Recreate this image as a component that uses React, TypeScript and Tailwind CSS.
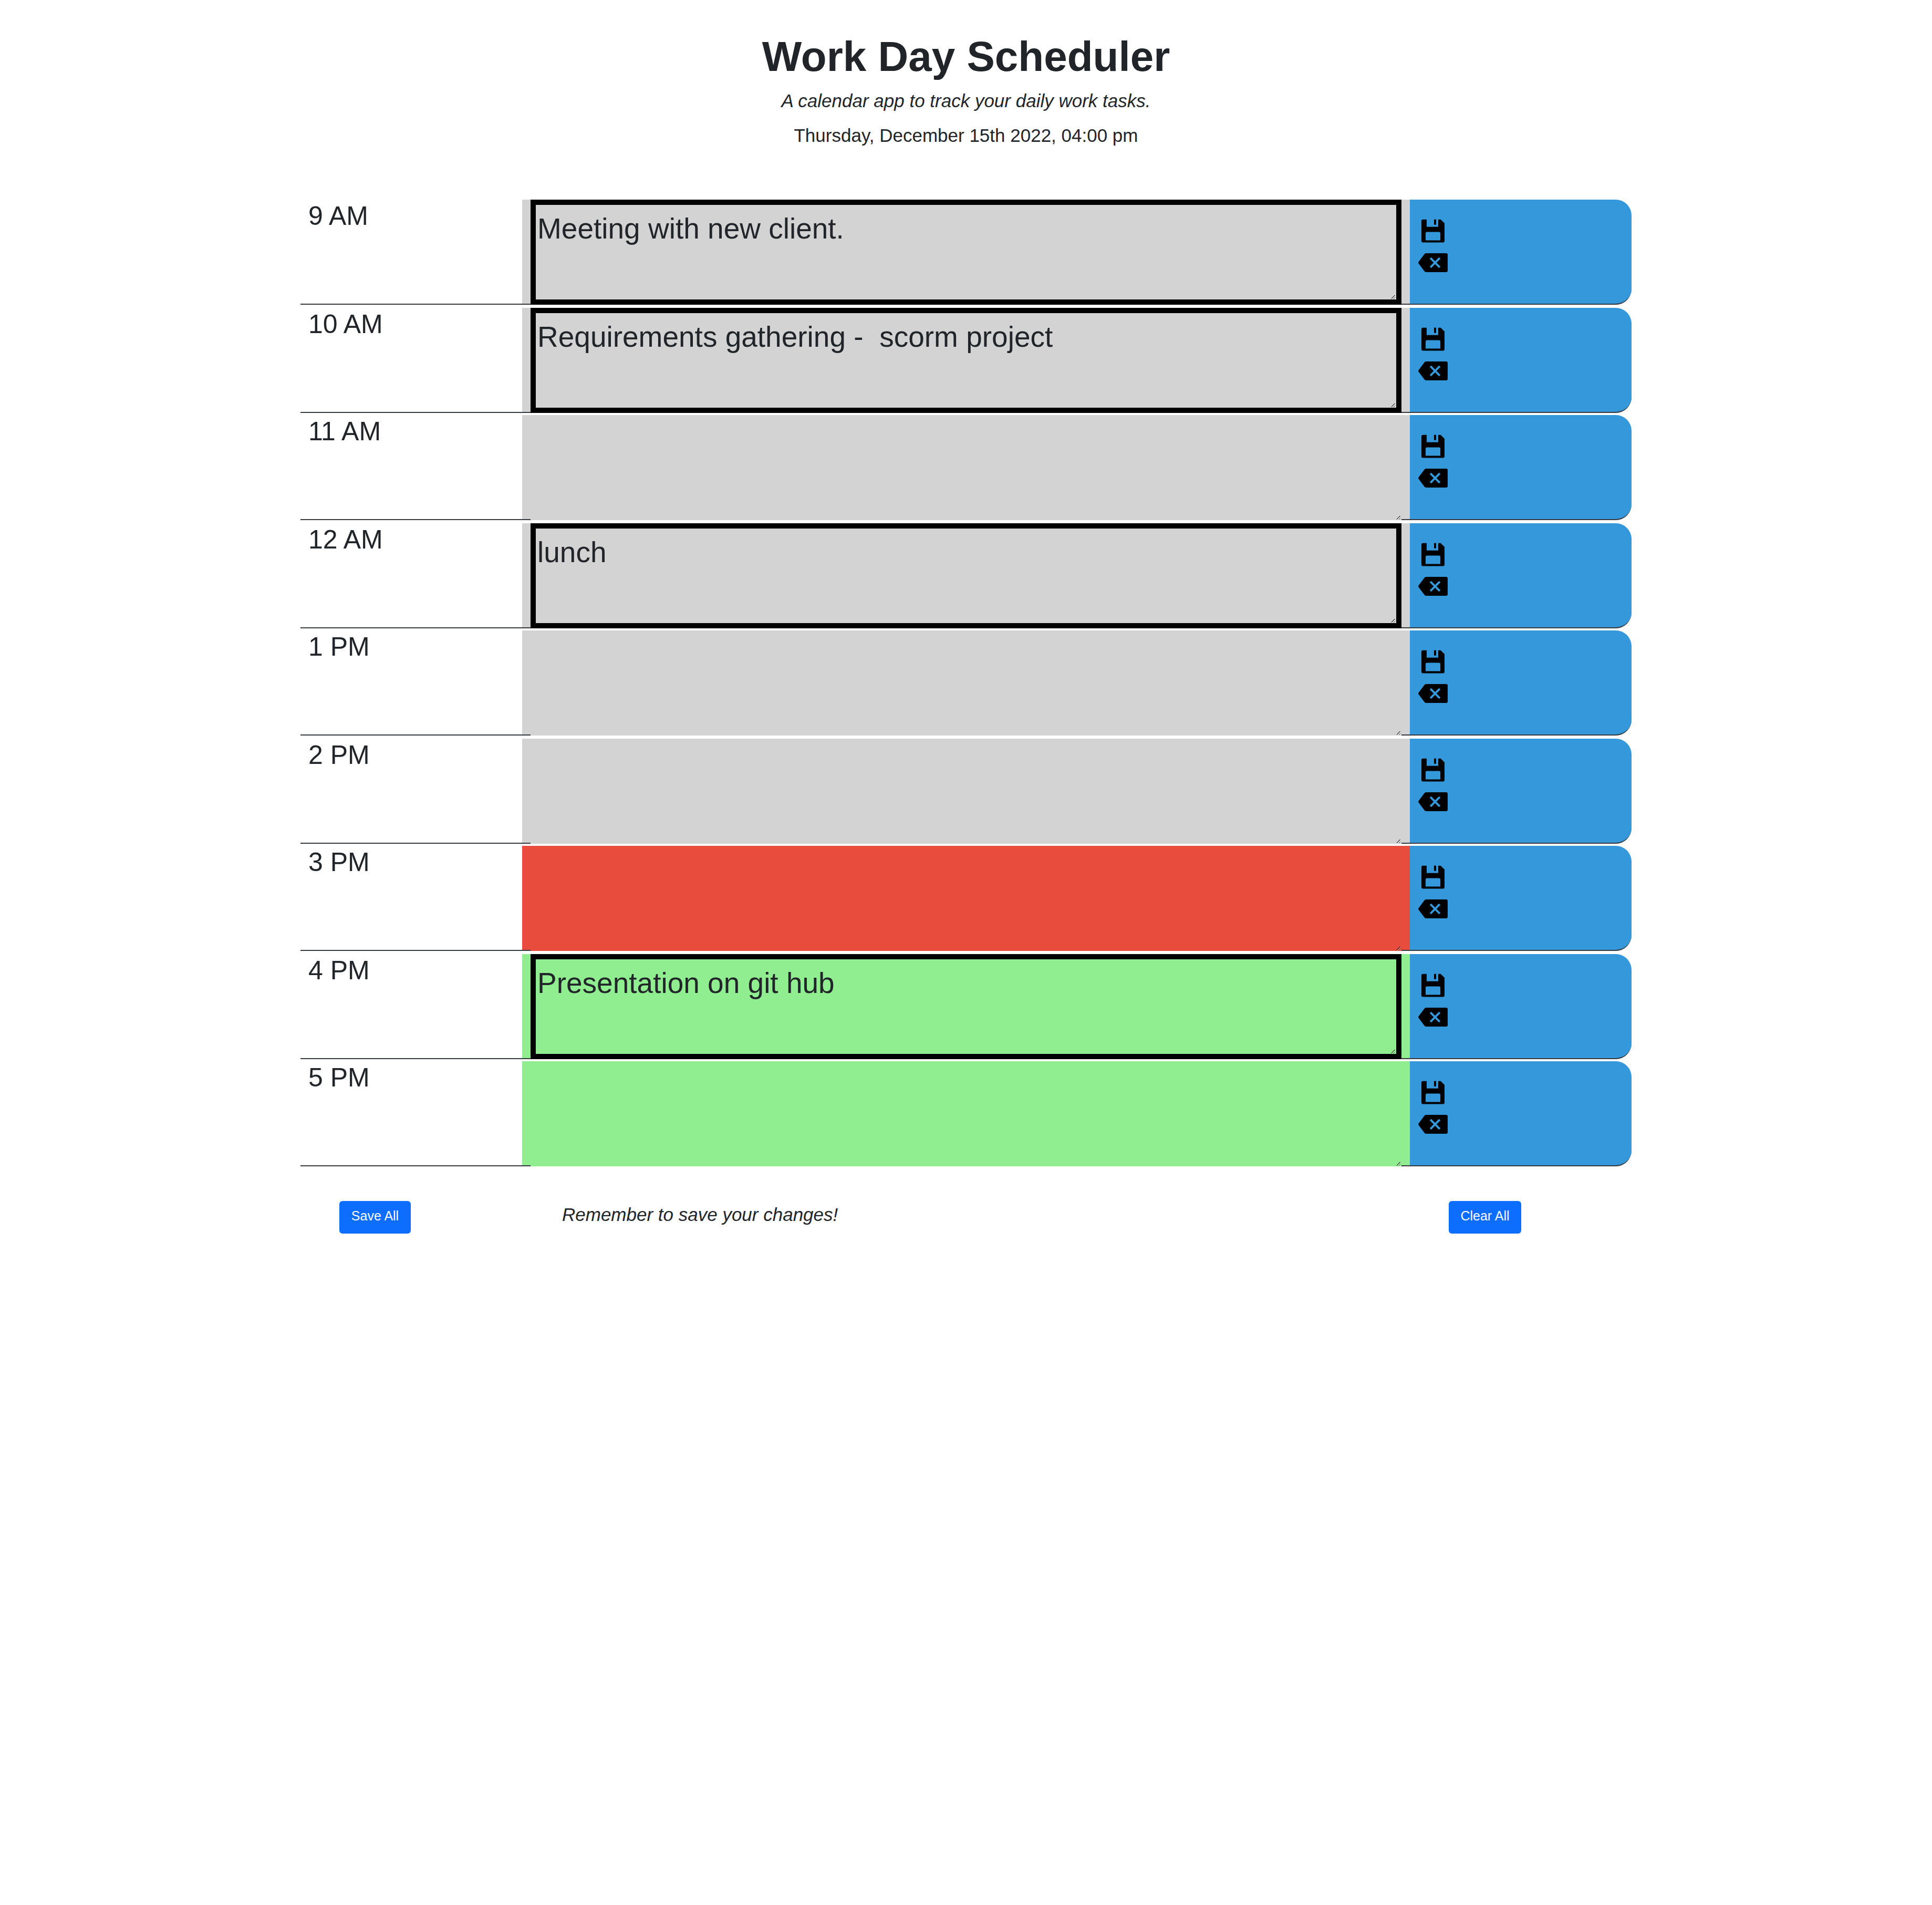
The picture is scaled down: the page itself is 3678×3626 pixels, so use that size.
type Tone = 'past' | 'present' | 'future';

interface Slot {
  label: string;
  tone: Tone;
  task?: string;
}

const slots: Slot[] = [
  { label: '9 AM', tone: 'past', task: 'Meeting with new client.' },
  { label: '10 AM', tone: 'past', task: 'Requirements gathering -  scorm project' },
  { label: '11 AM', tone: 'past' },
  { label: '12 AM', tone: 'past', task: 'lunch' },
  { label: '1 PM', tone: 'past' },
  { label: '2 PM', tone: 'past' },
  { label: '3 PM', tone: 'present' },
  { label: '4 PM', tone: 'future', task: 'Presentation on git hub' },
  { label: '5 PM', tone: 'future' },
];

const toneClass: Record<Tone, string> = {
  past: 'bg-[#d3d3d3]',
  present: 'bg-[#e74c3c]',
  future: 'bg-[#90ee90]',
};

function SaveIcon() {
  return (
    <svg className="block h-[45px] w-11" viewBox="0 0 44 45" fill="#000">
      <path
        fillRule="evenodd"
        d="M3 .7H10V14.7H32V.7H36.5L44 8V41.5Q44 44.5 41 44.5H3Q0 44.5 0 41.5V3.7Q0 .7 3 .7ZM10.5 24.5Q8 24.5 8 27V40.5H36V27Q36 24.5 33.5 24.5Z"
      />
      <path d="M24 .7H28V10.7H24Z" />
    </svg>
  );
}

function BackspaceIcon() {
  return (
    <svg className="block h-9 w-14" viewBox="0 0 56 36">
      <path
        d="M15 0H53Q56 0 56 3V33Q56 36 53 36H15Q12.8 36 11.5 34L.6 19.5Q-.4 18 .6 16.5L11.5 2Q12.8 0 15 0Z"
        fill="#000"
      />
      <path d="M23.2 9.2L40.8 26.8M40.8 9.2L23.2 26.8" stroke="#3498db" strokeWidth="4" />
    </svg>
  );
}

function ResizeGrip() {
  return (
    <svg className="absolute right-0.5 bottom-[1px] h-[7px] w-[7px]" viewBox="0 0 7 7" shapeRendering="crispEdges">
      <path d="M6 1h1v1h-1zM5 2h1v1h-1zM4 3h1v1h-1zM3 4h1v1h-1zM2 5h1v1h-1zM1 6h1v1h-1zM6 5h1v1h-1zM5 6h1v1h-1z" fill="#fff" fillOpacity="0.7" />
      <path d="M5 0h2v1h-2zM4 1h2v1h-2zM3 2h2v1h-2zM2 3h2v1h-2zM1 4h2v1h-2zM0 5h2v1h-2zM0 6h1v1h-1zM6 4h1v1h-1zM5 5h1v1h-1zM4 6h1v1h-1z" fill="#000" fillOpacity="0.65" />
    </svg>
  );
}

function Row({ slot }: { slot: Slot }) {
  return (
    <div className="flex h-[200px]">
      <div className="w-[422px] border-b-2 border-[#343a40] pl-[15px] text-[50px] leading-[62px]">{slot.label}</div>
      <div className={`relative flex w-[1690px] border-b-2 border-[#343a40] px-4 ${toneClass[slot.tone]}`}>
        <div
          className={`relative -mb-0.5 h-[200px] w-full ${toneClass[slot.tone]} ${slot.task ? 'border-[10px] border-black' : ''}`}
        >
          {slot.task && <div className="pt-[3px] pl-[3px] text-[55px] leading-[84px] whitespace-pre">{slot.task}</div>}
          <ResizeGrip />
        </div>
      </div>
      <div className="flex w-[422px] flex-col gap-5 rounded-r-[30px] border-b-2 border-[#343a40] bg-[#3498db] pt-[37px] pl-4">
        <div className="pl-1.5">
          <SaveIcon />
        </div>
        <BackspaceIcon />
      </div>
    </div>
  );
}

export default function App() {
  return (
    <div className="min-h-[3626px] bg-white font-['Liberation_Sans',Arial,sans-serif] text-[#212529]">
      <header className="flex h-[380px] flex-col items-center pt-[60px]">
        <h1 className="text-[80px] leading-[96px] font-bold">Work Day Scheduler</h1>
        <p className="mt-2.5 text-[35px] leading-[52px] italic">A calendar app to track your daily work tasks.</p>
        <p className="mt-3.5 text-[35px] leading-[52px]">Thursday, December 15th 2022, 04:00 pm</p>
      </header>
      <main className="mx-auto w-[2534px]">
        <div className="grid grid-cols-1">
          {slots.map((slot, i) => (
            <div key={slot.label} className={i === slots.length - 1 ? '' : i % 2 === 0 ? 'pb-1.5' : 'pb-1'}>
              <Row slot={slot} />
            </div>
          ))}
        </div>
        <footer className="flex pt-[66px]">
          <div className="w-[422px] pl-[74px]">
            <button className="block h-[62px] w-[136px] rounded-[6px] bg-[#0d6efd] pb-1 text-[25px] text-white">Save All</button>
          </div>
          <div className="w-[1690px] pl-[76px] text-[35px] leading-[52px] italic">Remember to save your changes!</div>
          <div className="w-[422px] pl-[74px]">
            <button className="block h-[62px] w-[138px] rounded-[6px] bg-[#0d6efd] pb-1 text-[25px] text-white">Clear All</button>
          </div>
        </footer>
      </main>
    </div>
  );
}
